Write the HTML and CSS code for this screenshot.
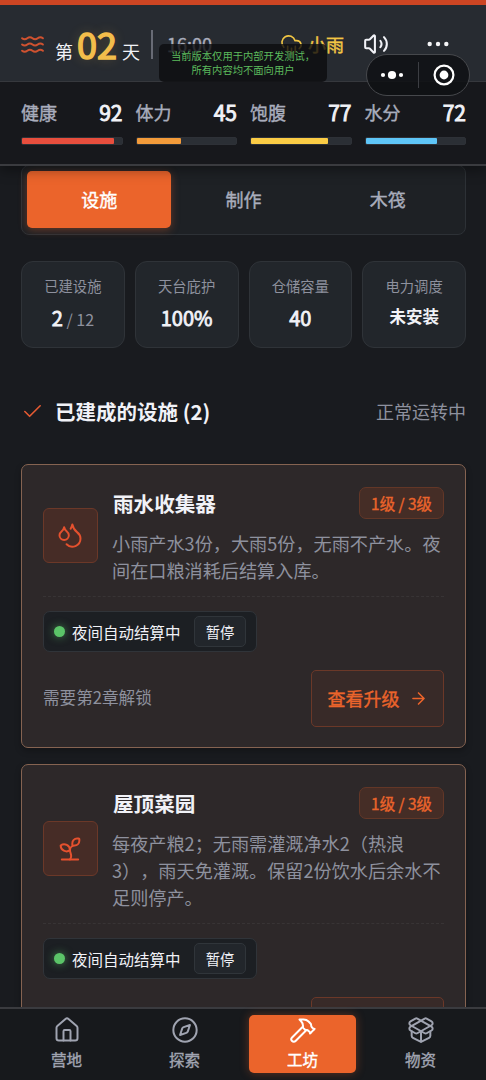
FILE: index.html
```html
<!DOCTYPE html>
<html lang="zh-CN">
<head>
<meta charset="utf-8">
<title>工坊</title>
<link rel="stylesheet" href="styles.css">
</head>
<body>
<div class="app">
  <header class="header">
    <div class="topbar">
      <svg class="icon waves" viewBox="0 0 24 24"><path d="M2 6c.6.5 1.2 1 2.5 1C7 7 7 5 9.5 5c2.6 0 2.4 2 5 2 2.5 0 2.5-2 5-2 1.3 0 1.9.5 2.5 1"/><path d="M2 12c.6.5 1.2 1 2.5 1 2.5 0 2.5-2 5-2 2.6 0 2.4 2 5 2 2.5 0 2.5-2 5-2 1.3 0 1.9.5 2.5 1"/><path d="M2 18c.6.5 1.2 1 2.5 1 2.5 0 2.5-2 5-2 2.6 0 2.4 2 5 2 2.5 0 2.5-2 5-2 1.3 0 1.9.5 2.5 1"/></svg>
      <div class="day"><span>第</span><b>02</b><span>天</span></div>
      <i class="rule"></i>
      <span class="time">16:00</span>
      <div class="weather">
        <svg class="icon" viewBox="0 0 24 24"><path d="M4 14.899A7 7 0 1 1 15.71 8h1.79a4.5 4.5 0 0 1 2.5 8.242"/><path d="M16 14v6M8 14v6M12 16v6"/></svg>
        <span>小雨</span>
      </div>
      <svg class="icon sound" viewBox="0 0 24 24"><path d="M11 4.702a.705.705 0 0 0-1.203-.498L6.413 7.587A1.4 1.4 0 0 1 5.416 8H3a1 1 0 0 0-1 1v6a1 1 0 0 0 1 1h2.416a1.4 1.4 0 0 1 .997.413l3.383 3.384A.705.705 0 0 0 11 19.298z"/><path d="M16 9a5 5 0 0 1 0 6"/><path d="M19.364 18.364a9 9 0 0 0 0-12.728"/></svg>
      <svg class="more" viewBox="0 0 22 6"><circle cx="2.7" cy="3" r="2.2"/><circle cx="11" cy="3" r="2.2"/><circle cx="19.3" cy="3" r="2.2"/></svg>
    </div>
    <div class="vitals">
      <div class="vital"><div class="vital-row"><span>健康</span><b>92</b></div><div class="bar"><i class="red" style="width:92%"></i></div></div>
      <div class="vital"><div class="vital-row"><span>体力</span><b>45</b></div><div class="bar"><i class="orange" style="width:45%"></i></div></div>
      <div class="vital"><div class="vital-row"><span>饱腹</span><b>77</b></div><div class="bar"><i class="yellow" style="width:77%"></i></div></div>
      <div class="vital"><div class="vital-row"><span>水分</span><b>72</b></div><div class="bar"><i class="blue" style="width:72%"></i></div></div>
    </div>
  </header>

  <main class="content">
    <div class="tabs"><div class="tab active">设施</div><div class="tab">制作</div><div class="tab">木筏</div></div>
    <div class="stats">
      <div class="stat"><span>已建设施</span><b>2<small> / 12</small></b></div>
      <div class="stat"><span>天台庇护</span><b>100%</b></div>
      <div class="stat"><span>仓储容量</span><b>40</b></div>
      <div class="stat"><span>电力调度</span><b class="word">未安装</b></div>
    </div>
    <div class="section">
      <svg class="icon check" viewBox="0 0 24 24"><path d="M20 6 9 17l-5-5"/></svg>
      <h2>已建成的设施 (2)</h2>
      <span>正常运转中</span>
    </div>

    <article class="card">
      <div class="card-head">
        <div class="badge"><svg class="icon" viewBox="0 0 24 24"><path d="M7 16.3c2.2 0 4-1.83 4-4.05 0-1.16-.57-2.26-1.71-3.19S7.29 6.75 7 5.3c-.29 1.45-1.14 2.84-2.29 3.76S3 11.1 3 12.25c0 2.22 1.8 4.05 4 4.05z"/><path d="M12.56 6.6A10.97 10.97 0 0 0 14 3.02c.5 2.5 2 4.9 4 6.5s3 3.5 3 5.5a6.98 6.98 0 0 1-11.91 4.97"/></svg></div>
        <div class="info">
          <div class="title-row"><h3>雨水收集器</h3><span class="level">1级 / 3级</span></div>
          <p>小雨产水3份，大雨5份，无雨不产水。夜<br>间在口粮消耗后结算入库。</p>
        </div>
      </div>
      <div class="status"><i class="dot"></i><span>夜间自动结算中</span><button class="pause">暂停</button></div>
      <div class="card-foot">
        <span>需要第2章解锁</span>
        <button class="upgrade"><span>查看升级</span><svg class="icon" viewBox="0 0 24 24"><path d="M5 12h14M12 5l7 7-7 7"/></svg></button>
      </div>
    </article>

    <article class="card">
      <div class="card-head">
        <div class="badge"><svg class="icon" viewBox="0 0 24 24"><path d="M14 9.536V7a4 4 0 0 1 4-4h1.5a.5.5 0 0 1 .5.5V5a4 4 0 0 1-4 4 4 4 0 0 0-4 4c0 2 1 3 1 5a5 5 0 0 1-1 3"/><path d="M4 9a5 5 0 0 1 8 4 5 5 0 0 1-8-4"/><path d="M5 21h14"/></svg></div>
        <div class="info">
          <div class="title-row"><h3>屋顶菜园</h3><span class="level">1级 / 3级</span></div>
          <p>每夜产粮2；无雨需灌溉净水2（热浪<br>3），雨天免灌溉。保留2份饮水后余水不<br>足则停产。</p>
        </div>
      </div>
      <div class="status"><i class="dot"></i><span>夜间自动结算中</span><button class="pause">暂停</button></div>
      <div class="card-foot">
        <span>需要第2章解锁</span>
        <button class="upgrade"><span>查看升级</span><svg class="icon" viewBox="0 0 24 24"><path d="M5 12h14M12 5l7 7-7 7"/></svg></button>
      </div>
    </article>
  </main>

  <nav class="nav">
    <div class="nav-item"><svg class="icon" viewBox="0 0 24 24"><path d="M15 21v-8a1 1 0 0 0-1-1h-4a1 1 0 0 0-1 1v8"/><path d="M3 10a2 2 0 0 1 .709-1.528l7-5.999a2 2 0 0 1 2.582 0l7 5.999A2 2 0 0 1 21 10v9a2 2 0 0 1-2 2H5a2 2 0 0 1-2-2z"/></svg><span>营地</span></div>
    <div class="nav-item"><svg class="icon" viewBox="0 0 24 24"><path d="m16.24 7.76-1.804 5.411a2 2 0 0 1-1.265 1.265L7.76 16.24l1.804-5.411a2 2 0 0 1 1.265-1.265z"/><circle cx="12" cy="12" r="10"/></svg><span>探索</span></div>
    <div class="nav-item active"><svg class="icon" viewBox="0 0 24 24"><path d="m15 12-9.373 9.373a1 1 0 0 1-3.001-3L12 9"/><path d="m18 15 4-4"/><path d="m21.5 11.5-1.914-1.914A2 2 0 0 1 19 8.172v-.344a2 2 0 0 0-.586-1.414l-1.657-1.657A6 6 0 0 0 12.516 3H9l1.243 1.243A6 6 0 0 1 12 8.485V10l2 2h1.172a2 2 0 0 1 1.414.586L18.5 14.5"/></svg><span>工坊</span></div>
    <div class="nav-item"><svg class="icon" viewBox="0 0 24 24"><path d="M12 22v-9"/><path d="M15.17 2.21a1.67 1.67 0 0 1 1.63 0L21 4.57a1.93 1.93 0 0 1 0 3.36L8.82 14.79a1.655 1.655 0 0 1-1.64 0L3 12.43a1.93 1.93 0 0 1 0-3.36z"/><path d="M20 13v3.87a2.06 2.06 0 0 1-1.11 1.83l-6 3.08a1.93 1.93 0 0 1-1.78 0l-6-3.08A2.06 2.06 0 0 1 4 16.87V13"/><path d="M21 12.43a1.93 1.93 0 0 0 0-3.36L8.83 2.2a1.64 1.64 0 0 0-1.63 0L3 4.57a1.93 1.93 0 0 0 0 3.36l12.18 6.86a1.636 1.636 0 0 0 1.63 0z"/></svg><span>物资</span></div>
  </nav>

  <div class="notice">当前版本仅用于内部开发测试，<br>所有内容均不面向用户</div>
  <div class="capsule">
    <svg viewBox="0 0 24 12"><circle cx="3" cy="6" r="2.1"/><circle cx="12" cy="6" r="4.1"/><circle cx="21" cy="6" r="2.1"/></svg>
    <i></i>
    <svg class="target" viewBox="0 0 22 22"><circle class="ring" cx="11" cy="11" r="9.4"/><circle cx="11" cy="11" r="4.4"/></svg>
  </div>
</div>
</body>
</html>
```

FILE: styles.css
```css
* { box-sizing: border-box; }
body {
  margin: 0;
  background: #191b1f;
  color: #f1f2f7;
  font-family: "Noto Sans CJK SC", sans-serif;
  text-spacing-trim: space-all;
}
h2, h3, p { margin: 0; }
button { font: inherit; margin: 0; padding: 0; }
.app {
  position: relative;
  display: flex;
  flex-direction: column;
  height: 1080px;
  overflow: hidden;
}
.icon {
  display: block;
  flex: none;
  fill: none;
  stroke: currentColor;
  stroke-width: 1.7;
  stroke-linecap: round;
  stroke-linejoin: round;
}

/* the regular cut is thickened slightly to act as a medium weight */
.time, .weather span, .vital-row span, .tab, .level, .upgrade span, .nav-item span {
  -webkit-text-stroke: .4px currentColor;
}

/* header */
.header {
  position: relative;
  z-index: 2;
  flex: none;
  height: 166px;
  border-top: 5px solid #cc4523;
  border-bottom: 2px solid #3a3b3f;
  background: #17181c;
  box-shadow: 0 4px 12px rgba(0, 0, 0, .4);
}
.topbar {
  display: flex;
  align-items: center;
  height: 77px;
  padding: 2px 37px 0 20px;
  background: #272b31;
  border-bottom: 1px solid #36383d;
}
.waves { width: 25px; height: 27px; color: #cf5230; stroke-width: 1.9; }
.day {
  display: flex;
  align-items: baseline;
  margin: 5px 0 0 10px;
  font-size: 18px;
  line-height: 40px;
}
.day b {
  margin: 0 5px 0 4px;
  color: #f3bd4b;
  font-size: 36px;
  font-weight: 400;
  -webkit-text-stroke: 1.5px currentColor;
  text-shadow: 0 0 12px rgba(243, 189, 75, .3);
}
.rule { width: 2px; height: 29px; margin-left: 11px; background: #686b75; }
.time { margin-left: 14px; color: #a9adbc; font-size: 18px; }
.weather {
  display: flex;
  align-items: center;
  gap: 5px;
  margin-left: auto;
  color: #f2c744;
  font-size: 18px;
}
.weather .icon { width: 23px; height: 23px; }
.sound { width: 26px; height: 26px; margin-left: 19px; stroke-width: 1.9; }
.more { width: 22px; height: 6px; margin-left: 38px; fill: #f5f5f7; }
.vitals {
  display: grid;
  grid-template-columns: repeat(4, 1fr);
  gap: 13px;
  padding: 16px 20px 0 21px;
}
.vital-row {
  display: flex;
  align-items: center;
  justify-content: space-between;
  height: 28px;
}
.vital-row span { color: #a9adbc; font-size: 18px; }
.vital-row b { font-size: 21px; font-weight: 400; -webkit-text-stroke: .9px currentColor; }
.bar { height: 8px; margin-top: 11px; border-radius: 2px; background: #2b2f35; border: 1px solid #2e3137; }
.bar i { display: block; height: 6px; border-radius: 1px; }
.red { background: #e84e3d; }
.orange { background: #f39b3a; }
.yellow { background: #fbcc45; }
.blue { background: #5ec5f7; }

/* content */
.content { flex: 1; min-height: 0; overflow: hidden; padding: 0 20px 0 21px; margin-top: -1px; }
.tabs {
  display: grid;
  grid-template-columns: repeat(3, 1fr);
  height: 70px;
  padding: 5px;
  border: 1px solid #2d3136;
  border-radius: 8px;
  background: #1e2125;
}
.tab {
  display: flex;
  align-items: center;
  justify-content: center;
  height: 57px;
  padding-bottom: 2px;
  border-radius: 5px;
  color: #a9adbc;
  font-size: 18px;
}
.tab.active { background: #eb642b; color: #fff; box-shadow: 0 2px 9px rgba(235, 100, 43, .35); }
.stats { display: grid; grid-template-columns: repeat(4, 1fr); gap: 10px; margin-top: 26px; }
.stat {
  display: flex;
  flex-direction: column;
  align-items: center;
  height: 87px;
  padding-top: 13px;
  border: 1px solid #2f3338;
  border-radius: 12px;
  background: #22262b;
}
.stat span { color: #8e919e; font-size: 14.3px; line-height: 22px; }
.stat b { margin-top: 4px; font-size: 20px; font-weight: 400; line-height: 34px; -webkit-text-stroke: .8px currentColor; }
.stat b.word { font-size: 16.5px; font-weight: 700; line-height: 30px; -webkit-text-stroke: 0; }
.stat small { color: #8e919e; font-size: 16px; -webkit-text-stroke: 0; }
.section { display: flex; align-items: center; height: 30px; margin-top: 48px; }
.check { width: 23px; height: 23px; color: #e45a32; }
.section h2 { margin-left: 11px; font-size: 20.5px; font-weight: 700; }
.section span { margin-left: auto; color: #8e919e; font-size: 18px; }

/* facility cards */
.card {
  margin-top: 16px;
  padding: 21px;
  border: 1px solid #856351;
  border-radius: 7px;
  background: #2d2829;
  box-shadow: 0 3px 6px rgba(0, 0, 0, .25);
}
.section + .card { margin-top: 38px; height: 284px; }
.card-head {
  display: flex;
  align-items: center;
  gap: 15px;
  padding-bottom: 12px;
  border-bottom: 1px dashed #383435;
}
.badge {
  display: flex;
  flex: none;
  align-items: center;
  justify-content: center;
  width: 55px;
  height: 55px;
  border: 1px solid #6b3828;
  border-radius: 6px;
  background: #462c26;
  color: #e5512e;
}
.badge .icon { width: 28px; height: 28px; margin-right: 1px; }
.info { flex: 1; }
.title-row { display: flex; align-items: center; justify-content: space-between; height: 33px; }
.title-row h3 { font-size: 20.6px; font-weight: 700; }
.level {
  display: flex;
  align-items: center;
  justify-content: center;
  width: 85px;
  height: 32px;
  border: 1px solid #633727;
  border-radius: 7px;
  background: #452d26;
  color: #eb642b;
  font-size: 15.4px;
}
.info p { margin: 11px 0 0 -1px; color: #8e919e; font-size: 18.15px; line-height: 27px; white-space: nowrap; }
.status {
  display: flex;
  align-items: center;
  width: 214px;
  height: 41px;
  margin-top: 14px;
  padding: 0 10px;
  border: 1px solid #303439;
  border-radius: 7px;
  background: #1c1f23;
  font-size: 15.5px;
}
.dot { width: 11px; height: 11px; margin-right: 7px; border-radius: 50%; background: #5bc468; box-shadow: 0 0 8px rgba(91, 196, 104, .6); }
.pause {
  width: 52px;
  height: 31px;
  margin-left: auto;
  padding-bottom: 1px;
  border: 1px solid #30353a;
  border-radius: 5px;
  background: #22262b;
  color: #f1f2f7;
  font-size: 14.3px;
}
.card-foot { display: flex; align-items: center; justify-content: space-between; margin-top: 18px; color: #8e919e; font-size: 16.6px; }
.card-foot > span { padding-bottom: 3px; }
.upgrade {
  display: flex;
  align-items: center;
  justify-content: center;
  gap: 9px;
  width: 133px;
  height: 57px;
  padding-bottom: 1px;
  border: 1px solid #6b3828;
  border-radius: 5px;
  background: #382a28;
  color: #eb642b;
  font-size: 18px;
}
.upgrade .icon { width: 19px; height: 19px; stroke-width: 2; }

/* bottom navigation */
.nav {
  position: relative;
  z-index: 2;
  display: grid;
  grid-template-columns: repeat(4, 107px);
  justify-content: space-between;
  flex: none;
  height: 73px;
  padding: 6px 12px 7px 13px;
  border-top: 2px solid #3a3b3f;
  background: #17191c;
}
.nav-item {
  display: flex;
  flex-direction: column;
  align-items: center;
  height: 58px;
  padding-top: 1px;
  border-radius: 5px;
  color: #a0a4b1;
  font-size: 15.5px;
  line-height: 24px;
}
.nav-item .icon { width: 28px; height: 28px; }
.nav-item span { margin-top: 3px; }
.nav-item.active { background: #eb642b; color: #fff; box-shadow: 0 0 10px rgba(235, 100, 43, .35); }

/* host overlays */
.notice {
  position: absolute;
  z-index: 4;
  top: 44px;
  left: 159px;
  width: 168px;
  height: 38px;
  padding-top: 5px;
  border-radius: 5px;
  background: rgba(12, 12, 15, .8);
  color: #5dbb5d;
  font-size: 10.3px;
  line-height: 13.5px;
  text-align: center;
  white-space: nowrap;
}
.capsule {
  position: absolute;
  z-index: 4;
  top: 54px;
  left: 366px;
  display: flex;
  align-items: center;
  justify-content: space-between;
  width: 104px;
  height: 42px;
  padding: 0 14px 0 13px;
  border: 1px solid #46484c;
  border-radius: 21px;
  background: rgba(16, 17, 20, .88);
}
.capsule svg { width: 24px; height: 12px; fill: #fff; }
.capsule i { width: 1px; height: 26px; background: #3c3e43; }
.capsule .target { width: 22px; height: 22px; }
.capsule .ring { fill: none; stroke: #fff; stroke-width: 2.2; }
```
